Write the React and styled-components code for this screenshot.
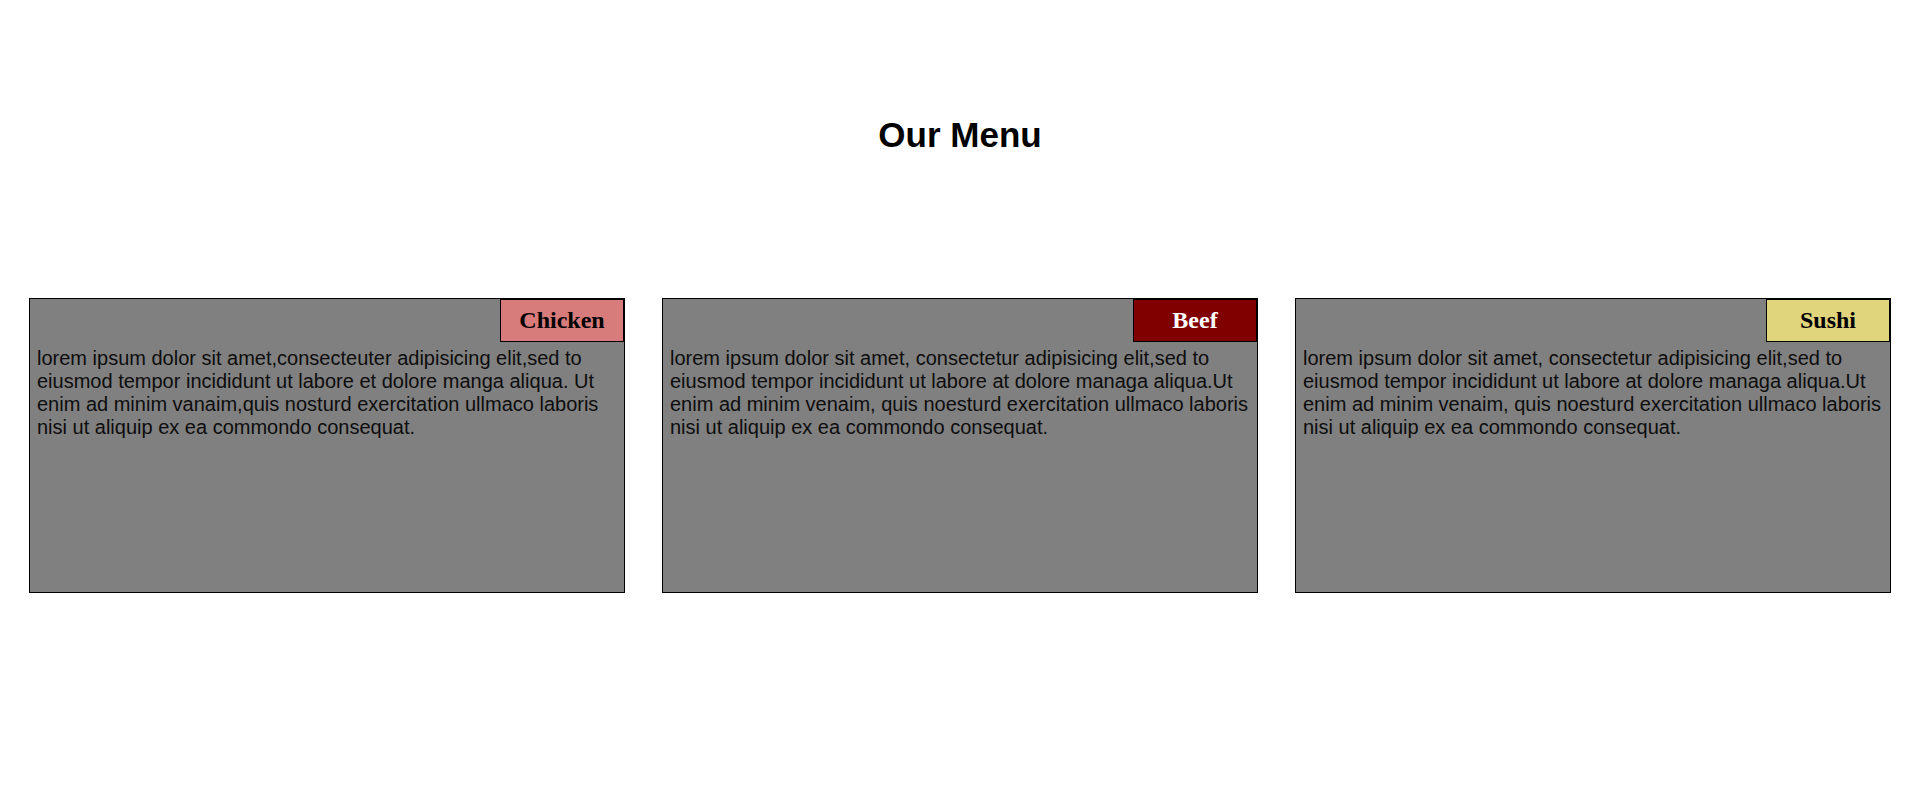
import React from 'react';
import styled, { createGlobalStyle } from 'styled-components';

const GlobalStyle = createGlobalStyle`
  html, body {
    margin: 0;
    padding: 0;
    background: #fff;
  }
  body {
    font-family: "Liberation Sans", Arial, sans-serif;
  }
`;

const Page = styled.div`
  display: flex;
  flex-direction: column;
  align-items: stretch;
  width: 100%;
  min-height: 812px;
`;

const Title = styled.h1`
  margin: 115px 0 0;
  text-align: center;
  font-size: 35px;
  line-height: 40px;
  font-weight: bold;
  color: #000;
`;

const Menu = styled.div`
  display: flex;
  flex-direction: row;
  gap: 37px;
  padding: 0 29px;
  margin-top: 143px;
`;

const Card = styled.div`
  flex: 1;
  box-sizing: border-box;
  height: 295px;
  border: 1px solid #000;
  background-color: #808080;
  display: flex;
  flex-direction: column;
`;

const CardTop = styled.div`
  display: flex;
  justify-content: flex-end;
`;

const Badge = styled.h2`
  box-sizing: border-box;
  width: 124px;
  height: 43px;
  margin: 0;
  border: 1px solid #000;
  background-color: ${(p) => p.$bg};
  color: ${(p) => p.$fg};
  font-family: "Liberation Serif", "Times New Roman", serif;
  font-size: 24px;
  font-weight: bold;
  line-height: 41px;
  text-align: center;
`;

const Text = styled.p`
  margin: 5px 0 0;
  padding: 0 7px;
  font-size: 20px;
  line-height: 23px;
  color: #0d0d0d;
`;

const items = [
  {
    name: 'Chicken',
    bg: '#d77b7b',
    fg: '#000',
    text: 'lorem ipsum dolor sit amet,consecteuter adipisicing elit,sed to eiusmod tempor incididunt ut labore et dolore manga aliqua. Ut enim ad minim vanaim,quis nosturd exercitation ullmaco laboris nisi ut aliquip ex ea commondo consequat.',
  },
  {
    name: 'Beef',
    bg: '#800000',
    fg: '#fff',
    text: 'lorem ipsum dolor sit amet, consectetur adipisicing elit,sed to eiusmod tempor incididunt ut labore at dolore managa aliqua.Ut enim ad minim venaim, quis noesturd exercitation ullmaco laboris nisi ut aliquip ex ea commondo consequat.',
  },
  {
    name: 'Sushi',
    bg: '#e0d47c',
    fg: '#000',
    text: 'lorem ipsum dolor sit amet, consectetur adipisicing elit,sed to eiusmod tempor incididunt ut labore at dolore managa aliqua.Ut enim ad minim venaim, quis noesturd exercitation ullmaco laboris nisi ut aliquip ex ea commondo consequat.',
  },
];

const App = () => {
  return (
    <>
      <GlobalStyle />
      <Page>
        <Title>Our Menu</Title>
        <Menu>
          {items.map((item) => (
            <Card key={item.name}>
              <CardTop>
                <Badge $bg={item.bg} $fg={item.fg}>{item.name}</Badge>
              </CardTop>
              <Text>{item.text}</Text>
            </Card>
          ))}
        </Menu>
      </Page>
    </>
  );
};

export default App;
